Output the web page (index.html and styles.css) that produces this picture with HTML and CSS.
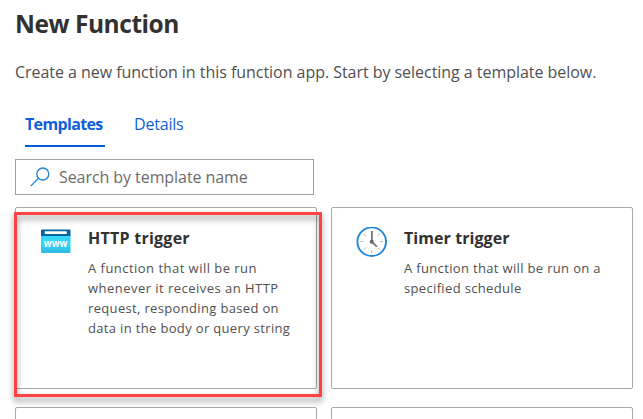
FILE: index.html
```html
<!DOCTYPE html>
<html lang="en">
<head>
<meta charset="utf-8">
<title>New Function</title>
<link rel="stylesheet" href="styles.css">
</head>
<body>
<main class="page">
  <h1 class="title">New Function</h1>
  <p class="intro">Create a new function in this function app. Start by selecting a template below.</p>
  <nav class="tabs">
    <a class="tab tab-active">Templates</a>
    <a class="tab">Details</a>
  </nav>
  <div class="search">
    <svg class="search-icon" width="20" height="20" viewBox="0 0 20 20" fill="none" stroke="#1b84d8" stroke-width="1.3"><circle cx="12.8" cy="7" r="6"/><path d="M8.500 11.300.7 19.100"/></svg>
    <span class="placeholder">Search by template name</span>
  </div>
  <section class="grid">
    <article class="card">
      <svg class="icon" width="32" height="32" viewBox="0 0 32 32">
        <defs><linearGradient id="web" x1="0" y1="0" x2="0" y2="1"><stop offset="0" stop-color="#34d9f7"/><stop offset=".6" stop-color="#32d0f1"/><stop offset="1" stop-color="#30b8e0"/></linearGradient></defs>
        <path d="M1 9h29.500v16a1 1 0 0 1-1 1H2a1 1 0 0 1-1-1z" fill="url(#web)"/>
        <path d="M2 2.600h27.500a1 1 0 0 1 1 1V9H1V3.600a1 1 0 0 1 1-1z" fill="#0762a8"/>
        <rect x="4.800" y="4.300" width="22" height="2.600" rx=".4" fill="#fff"/>
        <text class="www" x="3.800" y="19.500" textLength="23.500" lengthAdjust="spacingAndGlyphs">www</text>
      </svg>
      <div class="body">
        <h2 class="name">HTTP trigger</h2>
        <p class="desc"><span class="wide">A function that will be run</span><br><span class="wide">whenever it receives an HTTP</span><br>request, responding based on<br>data in the body or query string</p>
      </div>
      <div class="highlight"></div>
    </article>
    <article class="card">
      <svg class="icon" width="32" height="32" viewBox="0 1 32 32" fill="none">
        <circle cx="15.700" cy="15.700" r="14.300" fill="#fff" stroke="#1f86de" stroke-width="1.900"/>
        <path d="M15.700 24v3M4.500 15.500h2.700M24.200 15.500h2.700M8 7.800l1.900 1.900M23.500 7.800l-1.900 1.900M8 23.400l1.900-1.900M23.500 23.400l-1.500-1.500" stroke="#a0a0a0" stroke-width=".8"/>
        <path d="M15.900 5v11l5 4.700" stroke="#707070" stroke-width="1.700"/>
        <circle cx="15.700" cy="15.800" r="2" fill="#666"/>
      </svg>
      <div class="body">
        <h2 class="name name-tight">Timer trigger</h2>
        <p class="desc">A function that will be run on a<br>specified schedule</p>
      </div>
    </article>
    <article class="card"></article>
    <article class="card"></article>
  </section>
</main>
</body>
</html>
```
FILE: styles.css
```css
* { box-sizing: border-box; }
html, body { margin: 0; height: 419px; overflow: hidden; background: #fff; }
body { font-family: "Open Sans", "Noto Sans", sans-serif; color: #323130; }
.page { width: 643px; height: 419px; padding: 8px 10px 0 15px; overflow: hidden; }
h1, h2, p { margin: 0; white-space: nowrap; }
.title { font-size: 24.5px; line-height: 32px; font-weight: 700; letter-spacing: -0.45px; }
.intro { margin-top: 21px; font-size: 16px; line-height: 22px; color: #505050; letter-spacing: -0.04px; }
.tabs { display: flex; gap: 29px; margin: 28px 0 0 10px; height: 36px; color: #0f5fdc; font-size: 16px; }
.tab { height: 36px; line-height: 26px; letter-spacing: -0.2px; }
.tab-active { width: 80px; font-weight: 700; letter-spacing: -0.65px; border-bottom: 2px solid #015cda; }
.search { display: flex; align-items: center; width: 299px; height: 36px; margin-top: 12px; padding-left: 14px; border: 1px solid #a19f9d; }
.search-icon { flex: none; }
.placeholder { margin-left: 9px; font-size: 16px; line-height: 22px; color: #6c6c6c; letter-spacing: -0.07px; }
.grid { display: grid; grid-template-columns: 302px 302px; grid-auto-rows: 182px; gap: 18px 14px; margin-top: 12px; }
.card { position: relative; display: flex; align-items: flex-start; padding: 19px 0 0 24px; border: 1px solid #a8a8a8; border-radius: 2px; }
.icon { flex: none; }
.www { font-size: 10px; font-weight: 700; fill: #fff; }
.body { margin-left: 16px; }
.name { font-size: 16px; line-height: 22px; font-weight: 700; letter-spacing: 0.25px; }
.name-tight { letter-spacing: 0.07px; }
.desc { margin-top: 9px; font-size: 13px; line-height: 20px; color: #505050; letter-spacing: 0.34px; }
.wide { letter-spacing: 0.47px; }
.highlight { position: absolute; z-index: 1; left: -2px; top: 4px; width: 308px; height: 185px; border: 3px solid #ff4343; filter: drop-shadow(0 4px 3px rgba(0, 0, 0, .45)); }
```
